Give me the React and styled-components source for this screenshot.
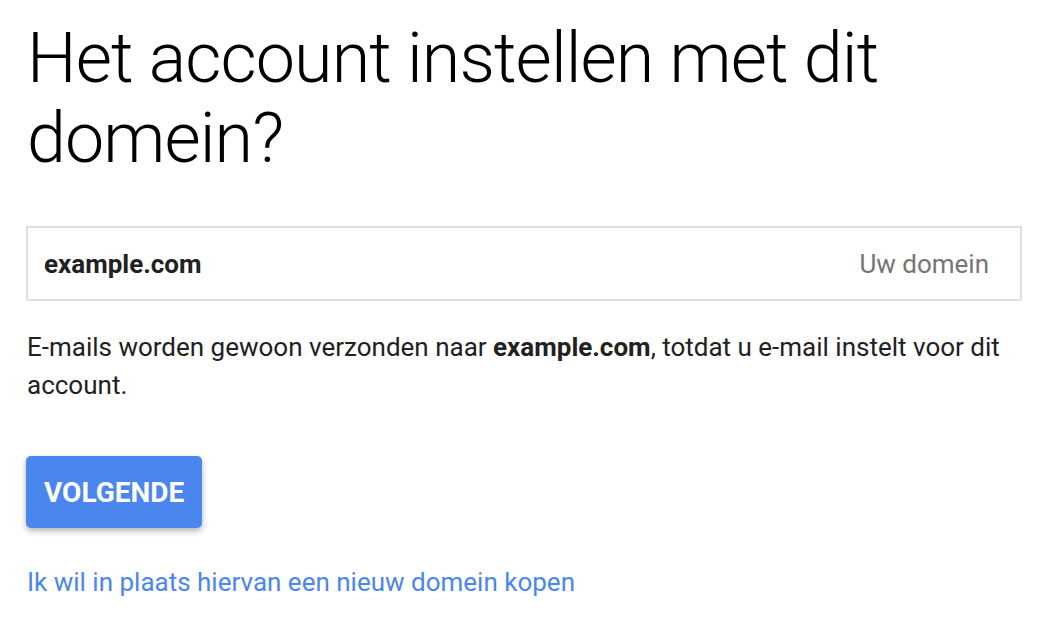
import React from "react";
import styled, { createGlobalStyle } from "styled-components";

const GlobalStyle = createGlobalStyle`
  body {
    margin: 0;
    background: #fff;
    font-family: Roboto, "Noto Sans", Arial, sans-serif;
    color: #202124;
  }
`;

const Page = styled.div`
  padding: 18px 38px 0 26px;
  display: flex;
  flex-direction: column;
`;

const Heading = styled.h1`
  margin: 0 0 0 1px;
  font-size: 70px;
  font-weight: 300;
  line-height: 80px;
  color: #000;
  letter-spacing: -0.9px;
`;

const Field = styled.label`
  margin-top: 48px;
  height: 75px;
  box-sizing: border-box;
  border: 2px solid #e0e0e0;
  display: flex;
  align-items: center;
  justify-content: space-between;
  padding: 0 31px 0 16px;
`;

const Value = styled.span`
  font-size: 26px;
  font-weight: 700;
  color: #212121;
`;

const Hint = styled.span`
  font-size: 26px;
  color: #757575;
`;

const Note = styled.p`
  margin: 27px 0 0 1px;
  font-size: 26px;
  line-height: 38px;
  color: #212121;
  b {
    font-weight: 700;
  }
`;

const Button = styled.button`
  margin-top: 52px;
  align-self: flex-start;
  height: 72px;
  padding: 0 18px;
  border: none;
  border-radius: 5px;
  background: #4a86ee;
  color: #fff;
  font-family: inherit;
  font-size: 28px;
  font-weight: 700;
  text-transform: uppercase;
  box-shadow: 0 3px 6px rgba(0, 0, 0, 0.3);
`;

const Link = styled.a`
  margin: 39px 0 0 1px;
  font-size: 26px;
  color: #4a86ed;
  text-decoration: none;
`;

export default function App() {
  return (
    <>
      <GlobalStyle />
      <Page>
        <Heading>
          Het account instellen met dit
          <br />
          domein?
        </Heading>
        <Field>
          <Value>example.com</Value>
          <Hint>Uw domein</Hint>
        </Field>
        <Note>
          E-mails worden gewoon verzonden naar <b>example.com</b>, totdat u
          e-mail instelt voor dit account.
        </Note>
        <Button>Volgende</Button>
        <Link href="#">Ik wil in plaats hiervan een nieuw domein kopen</Link>
      </Page>
    </>
  );
}
